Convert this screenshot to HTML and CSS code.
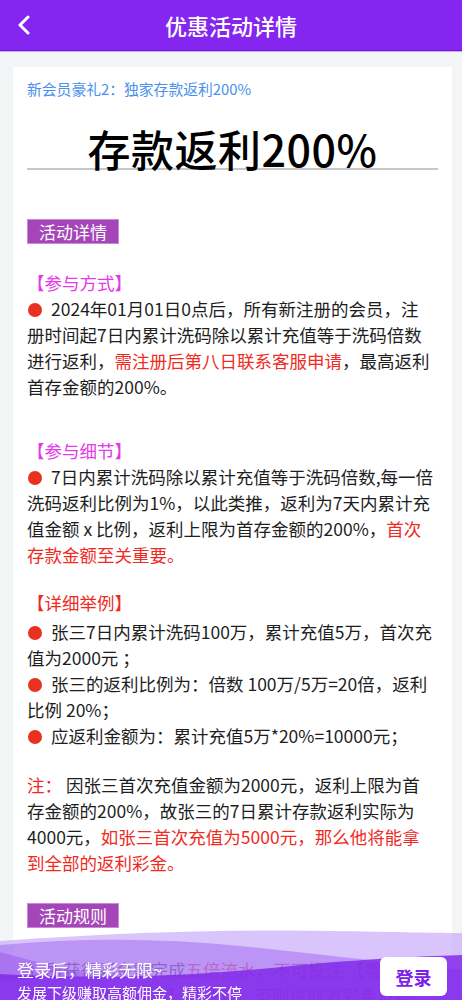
FILE: index.html
```html
<!DOCTYPE html>
<html lang="zh-CN">
<head>
<meta charset="utf-8">
<title>优惠活动详情</title>
<link rel="stylesheet" href="styles.css">
</head>
<body>
<header class="topbar">
  <a class="back" href="#" aria-label="返回">
    <svg width="14" height="20" viewBox="0 0 14 20"><polyline points="11,2 3,10 11,18" fill="none" stroke="#fff" stroke-width="3" stroke-linecap="round" stroke-linejoin="round"/></svg>
  </a>
  <h1 class="topbar-title">优惠活动详情</h1>
  <span></span>
</header>

<main class="card">
  <p class="subtitle">新会员豪礼2：独家存款返利200%</p>
  <h2 class="title">存款返利200%</h2>

  <div class="tag tag-first">活动详情</div>

  <h3 class="heading h-way">【参与方式】</h3>
  <p class="text"><span class="dot"></span>2024年01月01日0点后，所有新注册的会员，注册时间起7日内累计洗码除以累计充值等于洗码倍数进行返利，<span class="red">需注册后第八日联系客服申请</span>，最高返利首存金额的200%。</p>

  <h3 class="heading h-detail">【参与细节】</h3>
  <p class="text"><span class="dot"></span>7日内累计洗码除以累计充值等于洗码倍数,每一倍洗码返利比例为1%，以此类推，返利为7天内累计充值金额 x 比例，返利上限为首存金额的200%，<span class="red">首次存款金额至关重要。</span></p>

  <h3 class="heading heading-red h-example">【详细举例】</h3>
  <div class="list">
    <p class="text"><span class="dot"></span>张三7日内累计洗码100万，累计充值5万，首次充值为2000元 ；</p>
    <p class="text"><span class="dot"></span>张三的返利比例为：倍数 100万/5万=20倍，返利比例 20%；</p>
    <p class="text"><span class="dot"></span>应返利金额为：累计充值5万*20%=10000元；</p>
  </div>

  <p class="text note"><span class="red">注：</span> 因张三首次充值金额为2000元，返利上限为首存金额的200%，故张三的7日累计存款返利实际为4000元，<span class="red">如张三首次充值为5000元，那么他将能拿到全部的返利彩金。</span></p>

  <div class="tag tag-rules">活动规则</div>
  <p class="text rules">1. 所获得彩金需完成<span class="red">五倍流水，不可投注 【香港六合彩】、【体育赛事】等游戏，否则将取消彩金及盈利。</span></p>
  <p class="text">2. 每位会员仅可享受一次此优惠。</p>
</main>

<aside class="promo">
  <svg class="waves" viewBox="0 0 462 84" preserveAspectRatio="none" aria-hidden="true">
    <path d="M0 11 C 120 2, 240 -1, 330 1 C 400 2, 440 3, 462 3 L462 84 L0 84 Z" fill="rgba(196,160,250,0.62)"/>
    <path d="M0 15 C 80 8, 160 8, 240 16 C 320 24, 400 34, 462 40 L462 84 L0 84 Z" fill="rgba(150,90,240,0.45)"/>
    <path d="M0 22 C 30 30, 60 40, 110 47 L0 50 Z" fill="rgba(140,60,235,0.35)"/>
    <path d="M0 44 C 100 50, 200 46, 300 35 C 380 28, 430 26, 462 25 L462 84 L0 84 Z" fill="rgba(128,38,236,0.82)"/>
  </svg>
  <div class="promo-text">
    <p class="promo-main">登录后，精彩无限~</p>
    <p class="promo-sub">发展下级赚取高额佣金，精彩不停</p>
  </div>
  <button class="login">登录</button>
</aside>
</body>
</html>
```

FILE: styles.css
```css
* {
  box-sizing: border-box;
  margin: 0;
  padding: 0;
}

body {
  font-family: "Noto Sans CJK SC", "Noto Sans", sans-serif;
  background: #f4f5f7;
  color: #1e1e1e;
  width: 462px;
  min-height: 1000px;
}

.topbar {
  height: 51px;
  background: #8425f0;
  border-bottom: 1px solid #7219df;
  box-shadow: 0 1px 0 #caa8f6;
  display: grid;
  grid-template-columns: 60px 1fr 60px;
  align-items: center;
}

.back {
  display: flex;
  align-items: center;
  padding-left: 17px;
  height: 50px;
}

.topbar-title {
  text-align: center;
  color: #fff;
  font-size: 22px;
  font-weight: 500;
  line-height: 50px;
}

.card {
  margin: 16px 10px 0 13px;
  background: #fff;
  padding: 12px 18px 140px 14px;
}

.subtitle {
  font-size: 14.8px;
  line-height: 20px;
  color: #4a8fec;
}

.title {
  margin: 29px -4px 0 0;
  font-size: 43px;
  line-height: 40px;
  font-weight: 500;
  color: #000;
  text-align: center;
  border-bottom: 2px solid #c8c8c8;
  letter-spacing: 0.5px;
}

.tag {
  display: inline-block;
  background: #a546b8;
  border: 1px solid #c88ad6;
  color: #fff;
  font-size: 17px;
  line-height: 23px;
  padding: 0 11px;
}

.tag-first {
  margin-top: 49px;
}

.heading {
  font-size: 17.5px;
  line-height: 26px;
  font-weight: 400;
  color: #e437e8;
}

.heading-red {
  color: #ee2a1e;
}

.h-way {
  margin-top: 26px;
}

.h-detail {
  margin-top: 38px;
}

.h-example {
  margin-top: 22px;
}

.text {
  font-size: 17.5px;
  line-height: 26px;
}

.list {
  margin-top: 3px;
}

.note {
  margin-top: 23px;
}

.tag-rules {
  margin-top: 27px;
}

.rules {
  margin-top: 29px;
}

.red {
  color: #ef2b1f;
}

.dot {
  display: inline-block;
  width: 14px;
  height: 14px;
  border-radius: 50%;
  background: #e8311f;
  margin: 0 9px 0 1px;
  vertical-align: -1px;
}

.promo {
  position: fixed;
  left: 0;
  right: 0;
  bottom: -14px;
  height: 84px;
  display: flex;
  align-items: flex-start;
  padding: 27px 15px 0 17px;
}

.waves {
  position: absolute;
  inset: 0;
  width: 100%;
  height: 100%;
}

.promo-text {
  position: relative;
  margin-top: 1px;
  color: #fff;
}

.promo-main {
  font-size: 17px;
  line-height: 24px;
}

.promo-sub {
  font-size: 15px;
  line-height: 22px;
}

.login {
  position: relative;
  margin-left: auto;
  width: 67px;
  height: 39px;
  background: #fff;
  border: none;
  border-radius: 6px;
  color: #7a20e8;
  font-family: "Noto Sans CJK SC", sans-serif;
  font-size: 18px;
  font-weight: 700;
}
```
